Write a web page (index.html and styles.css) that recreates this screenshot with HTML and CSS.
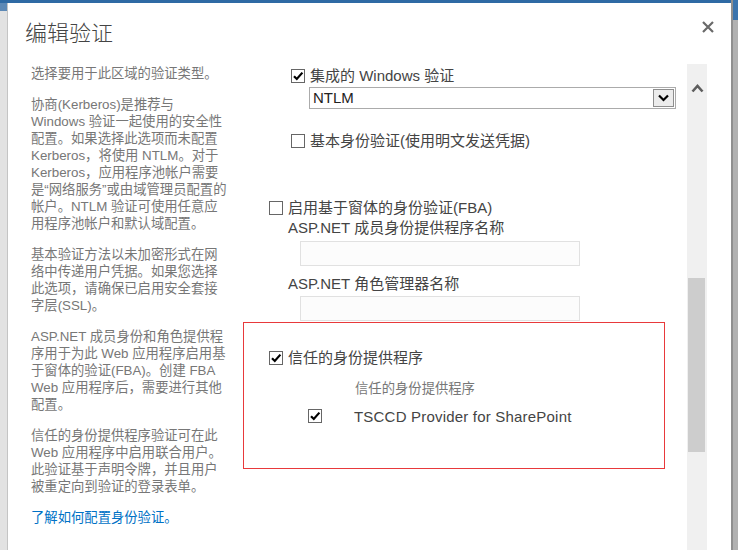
FILE: index.html
```html
<!DOCTYPE html>
<html lang="zh-CN">
  <head>
    <meta charset="UTF-8" />
    <meta name="viewport" content="width=device-width, initial-scale=1.0" />
    <title>编辑验证</title>

    <link rel="stylesheet" href="styles.css">
  </head>
  <body>
    <div class="page">
      <div class="side side-left"></div>

      <div class="dialog">
        <div class="dialog-head">
          <h1 class="dialog-title">编辑验证</h1>
          <span class="dialog-close">
            <svg width="12" height="12" viewBox="0 0 12 12">
              <path d="M1 1 L11 11 M11 1 L1 11" stroke="#6a6a6a" stroke-width="2.2" fill="none" />
            </svg>
          </span>
        </div>

        <div class="dialog-body">
          <div class="dialog-content">
            <!-- help text -->
            <div class="help">
              <p>选择要用于此区域的验证类型。</p>
              <p>协商(Kerberos)是推荐与<br>Windows 验证一起使用的安全性<br>配置。如果选择此选项而未配置<br>Kerberos，将使用 NTLM。对于<br>Kerberos，应用程序池帐户需要<br>是“网络服务”或由域管理员配置的<br>帐户。NTLM 验证可使用任意应<br>用程序池帐户和默认域配置。</p>
              <p>基本验证方法以未加密形式在网<br>络中传递用户凭据。如果您选择<br>此选项，请确保已启用安全套接<br>字层(SSL)。</p>
              <p>ASP.NET 成员身份和角色提供程<br>序用于为此 Web 应用程序启用基<br>于窗体的验证(FBA)。创建 FBA<br>Web 应用程序后，需要进行其他<br>配置。</p>
              <p>信任的身份提供程序验证可在此<br>Web 应用程序中启用联合用户。<br>此验证基于声明令牌，并且用户<br>被重定向到验证的登录表单。</p>
              <a href="#" class="help-link">了解如何配置身份验证。</a>
            </div>

            <!-- form fields -->
            <div class="fields">
              <label class="check-row row-windows">
                <span class="check is-checked">
                  <svg width="12" height="12" viewBox="0 0 12 12"><path d="M2 6.2 L4.8 9 L10.4 2.6" stroke="#000" stroke-width="2.2" fill="none" /></svg>
                </span>
                集成的 Windows 验证
              </label>

              <div class="select">
                <span class="select-value">NTLM</span>
                <span class="select-button">
                  <svg width="11" height="8" viewBox="0 0 11 8"><path d="M1 1.5 L5.5 6 L10 1.5" stroke="#000" stroke-width="2.2" fill="none" /></svg>
                </span>
              </div>

              <label class="check-row row-basic">
                <span class="check"></span>
                基本身份验证(使用明文发送凭据)
              </label>

              <label class="check-row row-fba">
                <span class="check"></span>
                启用基于窗体的身份验证(FBA)
              </label>

              <div class="field-label">ASP.NET 成员身份提供程序名称</div>
              <input type="text" class="text-input input-member" />

              <div class="field-label label-role">ASP.NET 角色管理器名称</div>
              <input type="text" class="text-input input-role" />

              <div class="trusted-box">
                <label class="check-row row-trusted">
                  <span class="check is-checked">
                    <svg width="12" height="12" viewBox="0 0 12 12"><path d="M2 6.2 L4.8 9 L10.4 2.6" stroke="#000" stroke-width="2.2" fill="none" /></svg>
                  </span>
                  信任的身份提供程序
                </label>
                <div class="provider-caption">信任的身份提供程序</div>
                <div class="provider-row">
                  <span class="check is-checked">
                    <svg width="12" height="12" viewBox="0 0 12 12"><path d="M2 6.2 L4.8 9 L10.4 2.6" stroke="#000" stroke-width="2.2" fill="none" /></svg>
                  </span>
                  <span class="provider-name">TSCCD Provider for SharePoint</span>
                </div>
              </div>
            </div>
          </div>

          <div class="scrollbar">
            <span class="scroll-up">
              <svg width="13" height="9" viewBox="0 0 13 9"><path d="M1.5 7.5 L6.5 2 L11.5 7.5" stroke="#5e5e5e" stroke-width="2.6" fill="none" /></svg>
            </span>
            <span class="scroll-thumb"></span>
          </div>
        </div>
      </div>

      <div class="side side-right"></div>
    </div>
  </body>
</html>
```

FILE: styles.css
```css
/* ------ */
/* General Styling */
* {
  margin: 0;
  padding: 0;
  box-sizing: border-box;
}

body {
  margin: 0;
  font-family: "Liberation Sans", "Noto Sans CJK SC", sans-serif;
  color: #444;
  background-color: #2f6aa4;
  overflow: hidden;
}

.page {
  display: flex;
  height: 550px;
  padding-top: 3px;
}

/* page behind the dialog */
.side {
  flex: none;
}

.side-left {
  width: 8px;
  background: linear-gradient(#5d89b6 0 8px, #e2e2e2 8px);
  border-right: 1px solid #c4c4c4;
}

.side-right {
  width: 7px;
  margin-top: -3px;
  background: linear-gradient(#3b74ad 0 20px, #b1b1b1 20px);
  border-left: 2px solid #8f8f8f;
}

/* ------ */
/* Dialog */
.dialog {
  width: 723px;
  flex: none;
  background-color: white;
  display: flex;
  flex-direction: column;
}

.dialog-head {
  height: 61px;
  display: flex;
  justify-content: space-between;
  align-items: flex-start;
  padding-left: 17px;
  padding-right: 17px;
}

.dialog-title {
  margin-top: 13px;
  font-family: "Noto Sans CJK SC", sans-serif;
  font-size: 22px;
  line-height: 30px;
  font-weight: 300;
  color: #444;
}

.dialog-close {
  display: block;
  margin-top: 18px;
  width: 12px;
  height: 12px;
}

.dialog-close svg {
  display: block;
}

.dialog-body {
  flex: 1;
  display: flex;
  min-height: 0;
}

.dialog-content {
  flex: 1;
  display: flex;
  padding-left: 23px;
}

/* ------ */
/* Help column */
.help {
  width: 238px;
  flex: none;
  padding-top: 1px;
  font-size: 13.33px;
  line-height: 17px;
  color: #777;
  white-space: nowrap;
}

.help p {
  margin-bottom: 14px;
}

.help-link {
  color: #0072c6;
  text-decoration: none;
}

/* ------ */
/* Fields column */
.fields {
  flex: 1;
  display: flex;
  flex-direction: column;
  align-items: flex-start;
  font-size: 15px;
  color: #444;
}

.check-row {
  display: flex;
  align-items: center;
  gap: 5px;
  height: 20px;
  line-height: 20px;
  white-space: nowrap;
}

.check {
  width: 14px;
  height: 14px;
  flex: none;
  border: 1px solid #666;
  background-color: white;
  display: flex;
  align-items: center;
  justify-content: center;
}

.check svg {
  display: block;
}

.row-windows {
  margin-top: 2px;
  margin-left: 22px;
}

.select {
  margin-top: 1px;
  margin-left: 40px;
  width: 367px;
  height: 22px;
  border: 1px solid #ababab;
  display: flex;
  justify-content: space-between;
  align-items: stretch;
  color: #222;
}

.select-value {
  padding-left: 3px;
  line-height: 20px;
}

.select-button {
  width: 21px;
  margin: 1px;
  border: 1px solid #8e8e8e;
  background-color: #ececec;
  display: flex;
  align-items: center;
  justify-content: center;
}

.row-basic {
  margin-top: 22px;
  margin-left: 22px;
}

.row-fba {
  margin-top: 47px;
}

.field-label {
  margin-left: 19px;
  line-height: 20px;
  white-space: nowrap;
}

.label-role {
  margin-top: 8px;
}

.text-input {
  margin-left: 31px;
  width: 280px;
  height: 25px;
  border: 1px solid #e1e1e1;
  background-color: #fcfcfc;
  outline: none;
}

.input-member {
  margin-top: 3px;
}

.input-role {
  margin-top: 2px;
}

/* red highlight round the trusted provider block */
.trusted-box {
  margin-top: 1px;
  margin-left: -26px;
  width: 422px;
  height: 147px;
  border: 1px solid #e8393b;
  padding-left: 25px;
}

.row-trusted {
  margin-top: 25px;
}

.provider-caption {
  margin-top: 12px;
  margin-left: 86px;
  font-size: 13.33px;
  line-height: 17px;
  color: #777;
}

.provider-row {
  margin-top: 9px;
  display: flex;
  align-items: center;
  height: 20px;
  padding-left: 39px;
}

.provider-name {
  margin-left: 32px;
  white-space: nowrap;
  letter-spacing: 0.2px;
}

/* ------ */
/* Scrollbar */
.scrollbar {
  width: 20px;
  flex: none;
  margin-right: 24px;
  background-color: #f0f0f0;
  display: flex;
  flex-direction: column;
  align-items: center;
}

.scroll-up {
  margin-top: 20px;
  display: block;
  height: 9px;
}

.scroll-up svg {
  display: block;
}

.scroll-thumb {
  display: block;
  margin-top: 185px;
  width: 17px;
  height: 174px;
  margin-left: -1px;
  background-color: #cdcdcd;
}
```
